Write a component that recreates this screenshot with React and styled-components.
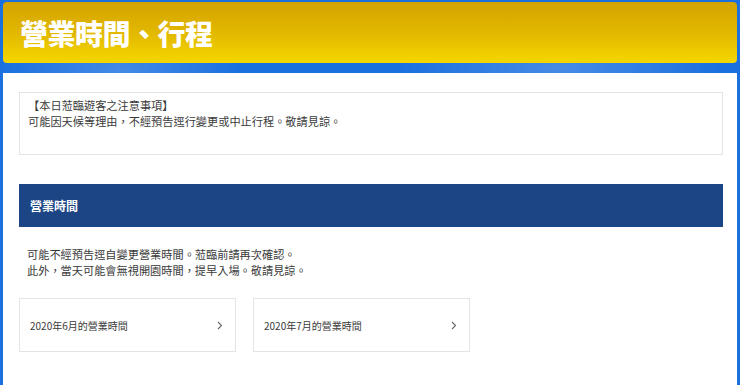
import React from "react"
import styled, { createGlobalStyle } from "styled-components"

const GlobalStyle = createGlobalStyle`
  html, body {
    margin: 0;
    background: #1a70df;
    font-family: "Noto Sans CJK TC", "Noto Sans", sans-serif;
  }
`

const Page = styled.div`
  height: 385px;
  overflow: hidden;
  padding: 2px 3px 0 3px;
  box-sizing: border-box;
  background:
    radial-gradient(ellipse 120px 40px at 120px 70px, rgba(120, 170, 240, 0.45), transparent),
    radial-gradient(ellipse 160px 40px at 560px 68px, rgba(140, 180, 240, 0.4), transparent),
    #1a70df;
`

const Header = styled.header`
  height: 61px;
  border-radius: 4px;
  background: linear-gradient(180deg, #d3a200 0%, #e2b800 50%, #f4d700 100%);
  display: flex;
  align-items: center;
  padding-left: 17px;
`

const Title = styled.h1`
  margin: 0;
  color: #fff;
  font-size: 28px;
  font-weight: 900;
  letter-spacing: -0.5px;
`

const Panel = styled.main`
  margin-top: 10px;
  background: #fff;
  padding: 19px 14px 60px 16px;
`

const Notice = styled.div`
  height: 63px;
  box-sizing: border-box;
  border: 1px solid #e4e4e4;
  padding: 4px 8px;
  font-size: 11.2px;
  line-height: 16px;
  color: #3a3a3a;
`

const SectionBar = styled.h2`
  margin: 29px 0 0 0;
  height: 43px;
  background: #1c4585;
  color: #fff;
  font-size: 12px;
  font-weight: 700;
  display: flex;
  align-items: center;
  padding-left: 11px;
`

const Paragraph = styled.p`
  margin: 19px 0 0 0;
  padding-left: 8px;
  font-size: 11.2px;
  line-height: 16px;
  color: #3a3a3a;
`

const CardRow = styled.div`
  display: flex;
  gap: 17px;
  margin-top: 20px;
`

const Card = styled.a`
  width: 217px;
  height: 54px;
  box-sizing: border-box;
  border: 1px solid #e4e4e4;
  display: flex;
  align-items: center;
  justify-content: space-between;
  padding: 0 12px 0 10px;
  font-size: 10px;
  color: #3a3a3a;
  text-decoration: none;
`

const Chevron = () => (
  <svg width="6" height="9" viewBox="0 0 6 9">
    <path d="M1 1 L4.5 4.5 L1 8" fill="none" stroke="#666" strokeWidth="1.1" />
  </svg>
)

const months = ["2020年6月的營業時間", "2020年7月的營業時間"]

const App = () => (
  <>
    <GlobalStyle />
    <Page>
      <Header>
        <Title>營業時間、行程</Title>
      </Header>
      <Panel>
        <Notice>
          【本日蒞臨遊客之注意事項】
          <br />
          可能因天候等理由，不經預告逕行變更或中止行程。敬請見諒。
        </Notice>
        <SectionBar>營業時間</SectionBar>
        <Paragraph>
          可能不經預告逕自變更營業時間。蒞臨前請再次確認。
          <br />
          此外，當天可能會無視開園時間，提早入場。敬請見諒。
        </Paragraph>
        <CardRow>
          {months.map((m) => (
            <Card key={m} href="#">
              {m}
              <Chevron />
            </Card>
          ))}
        </CardRow>
      </Panel>
    </Page>
  </>
)

export default App
